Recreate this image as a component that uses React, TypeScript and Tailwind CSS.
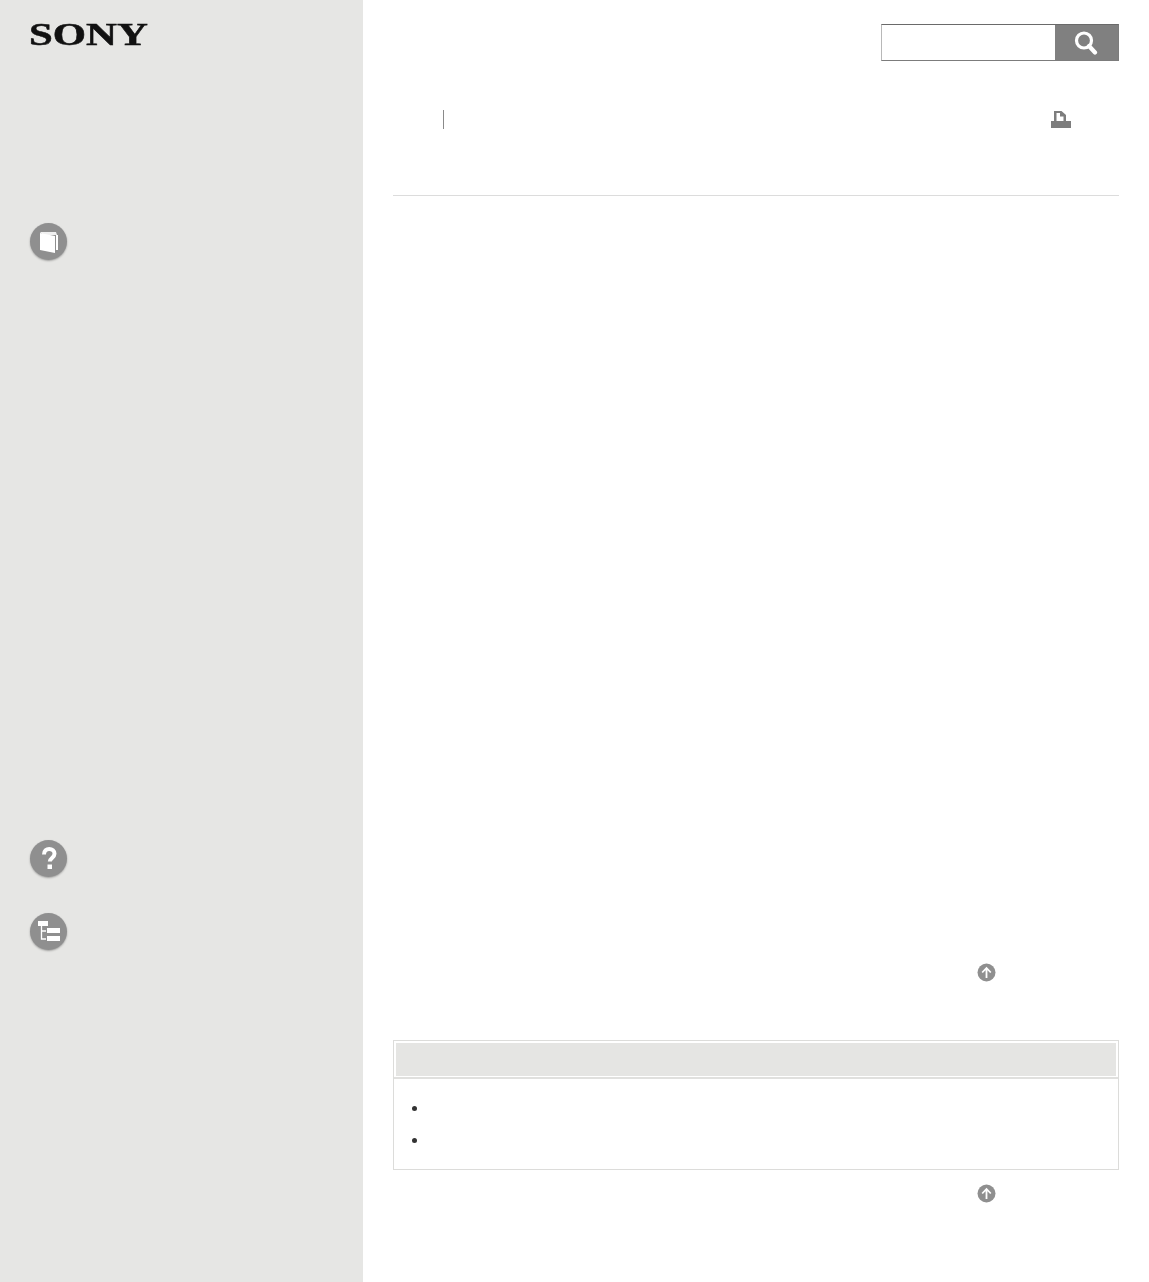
import { ReactNode } from 'react';

function RoundIcon({ children }: { children: ReactNode }) {
  return (
    <div className="size-[37px] rounded-full bg-[#8f8f8f] shadow-[0_1px_2px_rgba(0,0,0,0.3)] flex items-center justify-center">
      {children}
    </div>
  );
}

function BackToTop() {
  return (
    <div className="flex justify-end pr-[123px]">
      <svg className="size-[19px] blur-[0.4px]" viewBox="0 0 19 19">
        <circle cx="9.5" cy="9.5" r="9" fill="#8f8f8f" />
        <path d="M9.5 15V5M5.2 9.5l4.3-4.5 4.3 4.5" fill="none" stroke="#ffffff" strokeWidth="1.800" />
      </svg>
    </div>
  );
}

export default function App() {
  return (
    <div className="flex min-h-[1282px] bg-white font-['Liberation_Sans',sans-serif]">
      {/* Sidebar */}
      <div className="w-[363px] shrink-0 bg-[#e6e6e4] pl-[30px] pt-[24px]">
        <div className="-ml-px h-[20px] flex items-center font-['Liberation_Serif',serif] font-bold text-[31px] leading-none text-[#111111] origin-left scale-x-[1.38] [-webkit-text-stroke:0.5px_#111111]">
          SONY
        </div>
        <div className="mt-[179px]">
          <RoundIcon>
            <svg className="size-[26px] blur-[0.3px]" viewBox="0 0 26 26">
              <path d="M4 3h16l1 3H7z" fill="#f0f0f0" />
              <path d="M4 4l15 3v17L4 21z" fill="#ffffff" />
              <path d="M20 6h2v15h-2z" fill="#ffffff" />
            </svg>
          </RoundIcon>
        </div>
        <div className="mt-[580px]">
          <RoundIcon>
            <svg className="size-[26px] blur-[0.3px]" viewBox="0 0 26 26">
              <path d="M8 8.500C8 4.500 10.500 3 13.200 3c3 0 5.300 1.800 5.300 4.800 0 4-4.700 4.200-4.700 7.700" fill="none" stroke="#ffffff" strokeWidth="4" />
              <rect x="11.500" y="18.500" width="4.500" height="4.500" fill="#ffffff" />
            </svg>
          </RoundIcon>
        </div>
        <div className="mt-[36px]">
          <RoundIcon>
            <svg className="size-[28px] blur-[0.3px]" viewBox="0 0 28 28">
              <rect x="3" y="3" width="10" height="5" fill="#ffffff" />
              <rect x="12" y="10" width="13" height="5" fill="#ffffff" />
              <rect x="12" y="18" width="13" height="5" fill="#ffffff" />
              <path d="M6.500 8v13H11M6.500 13H11" fill="none" stroke="#ffffff" strokeWidth="1.300" />
            </svg>
          </RoundIcon>
        </div>
      </div>

      {/* Main column */}
      <div className="flex-1 min-w-0 pl-[30px] pr-[30px] pt-[24px]">
        <div className="flex justify-end">
          <div className="flex w-[238px] h-[37px] border border-[#7c7c7c] border-l-[#b8b8b8] border-t-[#6a6a6a] bg-white">
            <div className="flex-1" />
            <div className="w-[63px] bg-[#808080] flex items-center justify-center">
              <svg className="size-[26px] -ml-px blur-[0.3px]" viewBox="0 0 26 26">
                <circle cx="11" cy="10.500" r="7.500" fill="none" stroke="#ffffff" strokeWidth="3.200" />
                <path d="M16 16l6 6.500" stroke="#ffffff" strokeWidth="4.200" strokeLinecap="round" />
              </svg>
            </div>
          </div>
        </div>

        <div className="flex items-center justify-between h-[19px] mt-[49px] pl-[50px] pr-[47px]">
          <div className="w-px h-[19px] bg-[#8a8a8a]" />
          <svg className="w-[21px] h-[19px] mr-px blur-[0.4px]" viewBox="0 0 21 19">
            <path d="M4 11V1h7.500L16 5v6h-2.500V6.500h-3.500V3H6.500v8z" fill="#7d7d7d" />
            <rect x="1" y="11" width="20" height="7" fill="#7d7d7d" />
          </svg>
        </div>

        <div className="mt-[66px] border-t border-[#dcdcdc]" />

        <div className="mt-[767px]">
          <BackToTop />
        </div>

        <div className="mt-[58px] border border-[#dcdcda] h-[130px]">
          <div className="border-b-2 border-[#e0e0de] px-[2px] pt-[2px] pb-px h-[38px]">
            <div className="h-[33px] bg-[#e5e5e3]" />
          </div>
          <ul className="pl-[18px] pt-[27px] flex flex-col gap-[27px]">
            <li className="size-[5px] rounded-full bg-[#333333]" />
            <li className="size-[5px] rounded-full bg-[#333333]" />
          </ul>
        </div>

        <div className="mt-[14px]">
          <BackToTop />
        </div>
      </div>
    </div>
  );
}
